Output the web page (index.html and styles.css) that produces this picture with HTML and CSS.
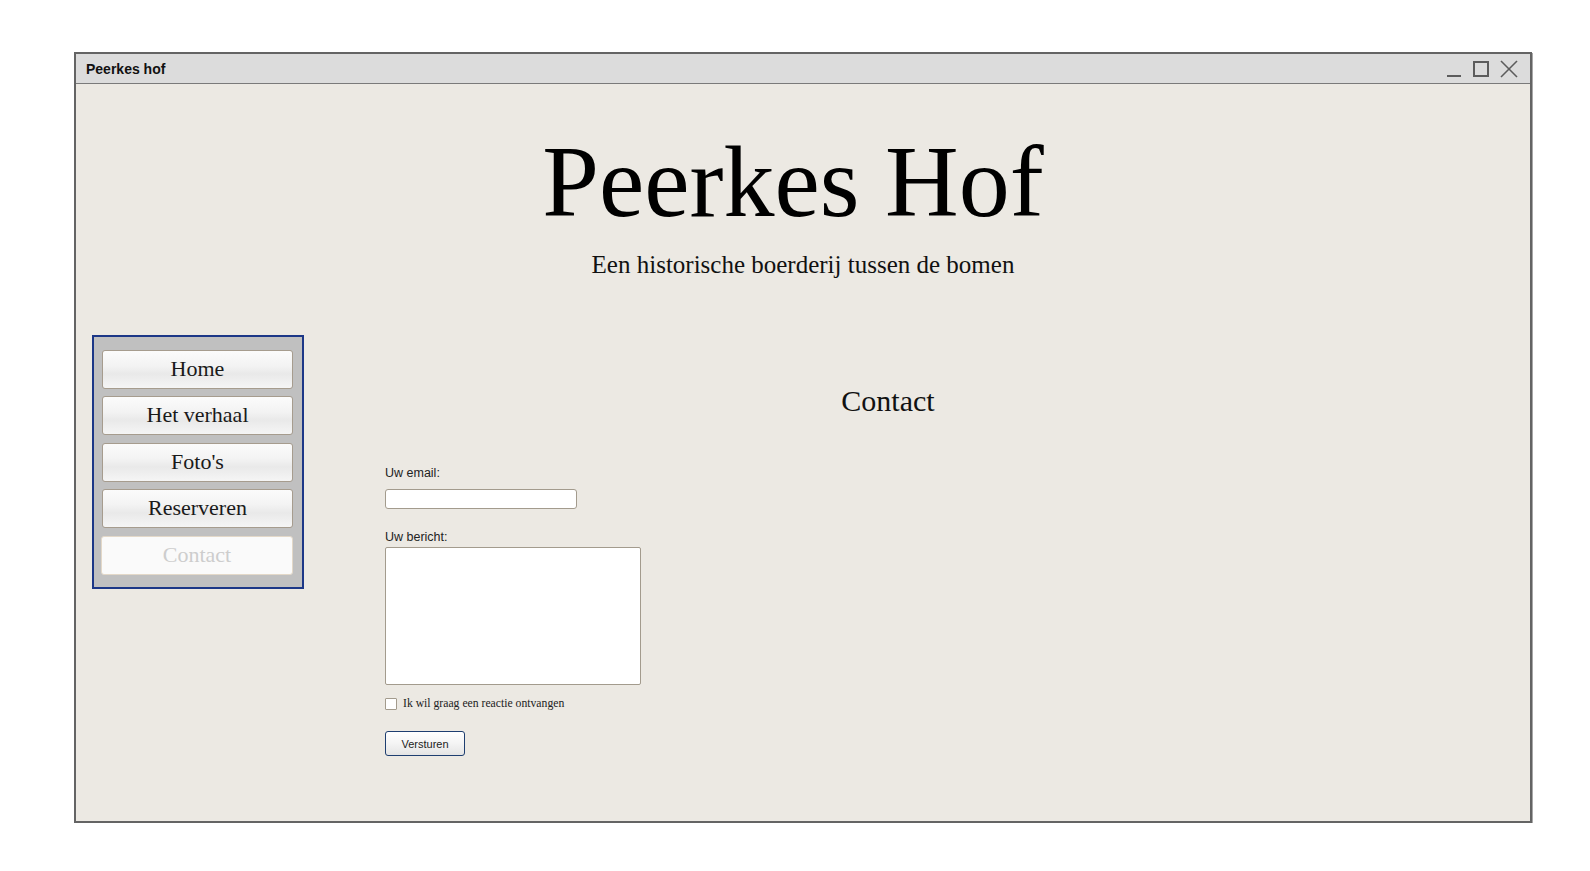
FILE: index.html
```html
<!DOCTYPE html>
<html lang="nl">
<head>
<meta charset="utf-8">
<title>Peerkes hof</title>
<link rel="stylesheet" href="styles.css">
</head>
<body>
<div class="window">
  <div class="titlebar">
    <span class="title">Peerkes hof</span>
    <svg class="controls" width="72" height="18" viewBox="0 0 72 18" aria-hidden="true">
      <line x1="1" y1="16" x2="15" y2="16" stroke="#5c5c5c" stroke-width="2"/>
      <rect x="28" y="2" width="14" height="14" fill="none" stroke="#5c5c5c" stroke-width="2"/>
      <line x1="55" y1="1" x2="71" y2="17" stroke="#5c5c5c" stroke-width="1.6"/>
      <line x1="71" y1="1" x2="55" y2="17" stroke="#5c5c5c" stroke-width="1.6"/>
    </svg>
  </div>
  <div class="content">
    <header class="site-header">
      <h1 class="site-title">Peerkes Hof</h1>
      <p class="site-subtitle">Een historische boerderij tussen de bomen</p>
    </header>
    <div class="body-row">
      <nav class="nav">
        <a class="nav-btn" href="#">Home</a>
        <a class="nav-btn" href="#">Het verhaal</a>
        <a class="nav-btn" href="#">Foto's</a>
        <a class="nav-btn" href="#">Reserveren</a>
        <a class="nav-btn nav-btn-active" href="#">Contact</a>
      </nav>
      <main class="main">
        <h2 class="page-title">Contact</h2>
        <form class="form">
          <label class="field-label label-email" for="email">Uw email:</label>
          <input class="input-email" id="email" type="text">
          <label class="field-label label-msg" for="msg">Uw bericht:</label>
          <textarea class="input-msg" id="msg"></textarea>
          <div class="check-row">
            <input class="check" type="checkbox" id="reply">
            <label class="check-label" for="reply">Ik wil graag een reactie ontvangen</label>
          </div>
          <button class="submit" type="button">Versturen</button>
        </form>
      </main>
    </div>
  </div>
</div>
</body>
</html>
```
FILE: styles.css
```css
* { box-sizing: border-box; }

html, body {
  margin: 0;
  padding: 0;
  background: #ffffff;
}

body {
  font-family: "Liberation Serif", "Times New Roman", serif;
}

.window {
  width: 1458px;
  height: 771px;
  margin: 52px 0 0 74px;
  border: 2px solid #646464;
  box-shadow: 1px 1px 0 #a8a8a8;
  display: flex;
  flex-direction: column;
  background: #ece9e3;
}

.titlebar {
  height: 30px;
  flex: 0 0 30px;
  background: #dcdcdc;
  border-bottom: 1px solid #7a7a7a;
  display: flex;
  align-items: center;
  justify-content: space-between;
  padding: 0 12px 0 10px;
}

.title {
  font-family: "Liberation Sans", Arial, sans-serif;
  font-weight: bold;
  font-size: 14px;
  color: #111;
  padding-top: 1px;
}

.controls {
  display: block;
  margin-top: 1px;
}

.content {
  flex: 1;
  display: flex;
  flex-direction: column;
}

.site-header {
  text-align: center;
}

.site-title {
  margin: 48px 0 0 0;
  padding-right: 20px;
  font-family: "Liberation Serif", "Times New Roman", serif;
  font-weight: normal;
  font-size: 102px;
  line-height: 100px;
  color: #000;
}

.site-subtitle {
  margin: 18px 0 0 0;
  font-size: 25px;
  line-height: 30px;
  color: #111;
}

.body-row {
  display: flex;
  align-items: flex-start;
  margin-top: 55px;
  padding-left: 16px;
}

.nav {
  width: 212px;
  height: 254px;
  flex: 0 0 212px;
  border: 2px solid #1c3787;
  background: #c0c0c0;
  padding: 13px 9px 0 8px;
  display: flex;
  flex-direction: column;
  gap: 7.4px;
}

.nav-btn {
  display: flex;
  align-items: center;
  justify-content: center;
  height: 39px;
  flex: 0 0 39px;
  border: 1px solid #a69c8e;
  border-radius: 3px;
  background: linear-gradient(#fbfbfb 0%, #f3f3f3 40%, #e9e9e9 62%, #f5f5f5 100%);
  color: #1a1a1a;
  font-size: 22px;
  text-decoration: none;
  padding-bottom: 1px;
}

.nav-btn-active {
  background: #fafafa;
  border-color: #e3d8c8;
  color: #cdcdcd;
  margin-left: -1px;
}

.main {
  width: 1004px;
  flex: 0 0 1004px;
  margin-left: 81px;
}

.page-title {
  margin: 50px 0 0 0;
  padding-left: 2px;
  text-align: center;
  font-weight: normal;
  font-size: 30px;
  line-height: 32px;
  color: #111;
}

.form {
  display: flex;
  flex-direction: column;
  align-items: flex-start;
}

.field-label {
  font-family: "Liberation Sans", Arial, sans-serif;
  font-size: 12.5px;
  line-height: 15px;
  color: #222;
  display: block;
}

.label-email {
  margin-top: 49px;
}

.input-email {
  margin-top: 8px;
  width: 192px;
  height: 20px;
  border: 1px solid #a39b8d;
  border-radius: 3px;
  background: #fff;
  padding: 0 3px;
}

.label-msg {
  margin-top: 21px;
}

.input-msg {
  margin: 2px 0 0 0;
  width: 256px;
  height: 138px;
  border: 1px solid #a39b8d;
  border-radius: 2px;
  background: #fff;
  resize: none;
  display: block;
}

.check-row {
  display: flex;
  align-items: center;
  gap: 6px;
  margin-top: 12px;
}

.check {
  appearance: none;
  -webkit-appearance: none;
  margin: 0;
  width: 12px;
  height: 12px;
  border: 1px solid #a39b8d;
  border-radius: 1px;
  background: #fff;
}

.check-label {
  font-family: "Liberation Serif", "Times New Roman", serif;
  font-size: 11.7px;
  line-height: 14px;
  color: #222;
}

.submit {
  margin-top: 20px;
  width: 80px;
  height: 25px;
  border: 1px solid #1e3e70;
  border-radius: 3px;
  background: linear-gradient(#ffffff 0%, #f4f4f4 50%, #e4e4e4 100%);
  font-family: "Liberation Sans", Arial, sans-serif;
  font-size: 11px;
  color: #222;
  padding: 0;
}
```
